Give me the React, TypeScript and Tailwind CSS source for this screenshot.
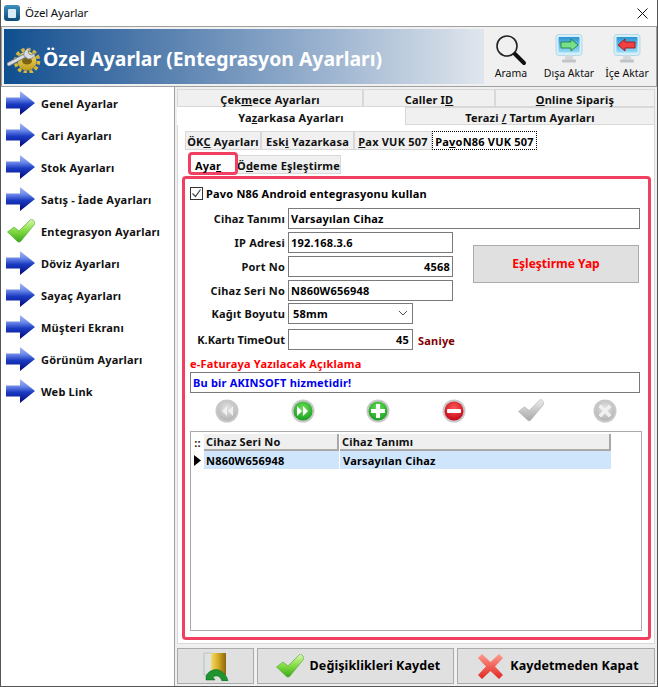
import { ReactNode } from 'react';

const uiFont = { fontFamily: '"Noto Sans", "DejaVu Sans", sans-serif' };

const ArrowIcon = ({ id }: { id: string }) => (
    <svg width="30" height="24" viewBox="0 0 30 24">
        <defs>
            <linearGradient id={id} x1="0" y1="0" x2="0" y2="1">
                <stop offset="0" stopColor="#a6b8f4" />
                <stop offset="0.3" stopColor="#6c8ae8" />
                <stop offset="0.55" stopColor="#1c3cc4" />
                <stop offset="1" stopColor="#00087a" />
            </linearGradient>
        </defs>
        <path d="M0 6.500h14V0l15 12-15 12v-6.500H0z" fill={`url(#${id})`} />
    </svg>
);

const CheckIcon = ({ id, w = 28, h = 24, gray = false }: { id: string; w?: number; h?: number; gray?: boolean }) => (
    <svg width={w} height={h} viewBox="0 0 28 24">
        <defs>
            <linearGradient id={id} x1="0" y1="0" x2="0" y2="1">
                <stop offset="0" stopColor={gray ? '#ececec' : '#d8f8b0'} />
                <stop offset="0.5" stopColor={gray ? '#c8c8c8' : '#84dc44'} />
                <stop offset="1" stopColor={gray ? '#a8a8a8' : '#3aa818'} />
            </linearGradient>
        </defs>
        <path d="M0.500 13L7 8l5 4L23 1c1-1 2-1 3 0l1.500 2c0.500 1 0.500 2-0.500 3L14 22c-1 1.500-3 1.500-4 0z" fill={`url(#${id})`} stroke={gray ? '#a8a8a8' : '#4aa82a'} strokeWidth="0.6" />
    </svg>
);

const RoundIcon = ({ id, c1, c2, gray, children }: { id: string; c1: string; c2: string; gray?: boolean; children: ReactNode }) => (
    <svg width="24" height="24" viewBox="0 0 24 24">
        <defs>
            <radialGradient id={id} cx="0.5" cy="0.35" r="0.7">
                <stop offset="0" stopColor={c1} />
                <stop offset="1" stopColor={c2} />
            </radialGradient>
        </defs>
        <circle cx="12" cy="12" r="11.5" fill="#c8c8c8" />
        <circle cx="12" cy="12" r="9.5" fill={`url(#${id})`} />
        <g fill={gray ? '#f0f0f0' : '#ffffff'}>{children}</g>
    </svg>
);

const GearIcon = () => (
    <svg width="34" height="28" viewBox="0 0 34 28">
        <defs>
            <linearGradient id="gear" x1="0" y1="0" x2="0" y2="1">
                <stop offset="0" stopColor="#f8e878" />
                <stop offset="1" stopColor="#c09818" />
            </linearGradient>
        </defs>
        <circle cx="20" cy="16" r="9.500" fill="url(#gear)" />
        <circle cx="20" cy="16" r="11.500" fill="none" stroke="#d8b838" strokeWidth="3.500" strokeDasharray="3.500 2.500" />
        <ellipse cx="20" cy="16" rx="5" ry="3.500" fill="#7a6414" />
        <path d="M2 19l17-9" stroke="#70747c" strokeWidth="4.500" strokeLinecap="round" />
        <path d="M2 19l17-9" stroke="#d8dce0" strokeWidth="3" strokeLinecap="round" />
        <path d="M17 11c-1-4 2-8 7-8l-3 3 1 3 3 1 3-2c0 4-3 6-7 6z" fill="#d8dce0" stroke="#70747c" strokeWidth="0.700" />
    </svg>
);

const MagnifierIcon = () => (
    <svg width="32" height="32" viewBox="0 0 32 32">
        <circle cx="12" cy="12" r="10" fill="none" stroke="#222" strokeWidth="1.600" />
        <path d="M20 20l9 9" stroke="#111" strokeWidth="4" strokeLinecap="round" />
    </svg>
);

const MonitorIcon = ({ id, c1, c2, left }: { id: string; c1: string; c2: string; left?: boolean }) => (
    <svg width="28" height="30" viewBox="0 0 28 30">
        <defs>
            <linearGradient id={id} x1="0" y1="0" x2="0" y2="1">
                <stop offset="0" stopColor="#2c94d4" />
                <stop offset="1" stopColor="#9adcf6" />
            </linearGradient>
        </defs>
        <rect x="1" y="0.500" width="26" height="21" rx="3" fill="#d4f0fa" stroke="#9cc8dc" strokeWidth="0.600" />
        <rect x="3.500" y="3" width="21" height="15.500" rx="1" fill={`url(#${id})`} />
        <path d="M10.500 21.500h7l1 4h-9z" fill="#d4d8dc" />
        <rect x="7" y="25.500" width="14" height="3" rx="1" fill="#c0c4c8" />
        <path
            d={left ? 'M5 11l7-6v3h10v6H12v3z' : 'M23 11l-7-6v3H6v6h10v3z'}
            fill={c1}
            stroke={c2}
            strokeWidth="0.800"
        />
    </svg>
);

const DoorIcon = () => (
    <svg width="26" height="29" viewBox="0 0 26 29">
        <defs>
            <linearGradient id="door" x1="0" y1="0" x2="1" y2="0">
                <stop offset="0" stopColor="#f4dc70" />
                <stop offset="0.5" stopColor="#d4a820" />
                <stop offset="1" stopColor="#8a6410" />
            </linearGradient>
        </defs>
        <rect x="1" y="1" width="8" height="22" fill="#dfe2e2" stroke="#a8acac" strokeWidth="0.600" />
        <path d="M8 1h15v22H8z" fill="url(#door)" />
        <path d="M3 24c3-6 10-8 15-5 3 2 6 5 7 10h-6c-1-3-3-5-5-5-2 0-3 0-4 1l2 3H3z" fill="#1f9430" stroke="#0f6a20" strokeWidth="0.500" />
    </svg>
);

const RedX = () => (
    <svg width="25" height="25" viewBox="0 0 25 25">
        <defs>
            <linearGradient id="redx" x1="0" y1="0" x2="0" y2="1">
                <stop offset="0" stopColor="#ff9a90" />
                <stop offset="1" stopColor="#e02820" />
            </linearGradient>
        </defs>
        <path d="M4 0l8.500 8L21 0l4 4-8 8.500 8 8.500-4 4-8.500-8L4 25l-4-4 8-8.500L0 4z" fill="url(#redx)" />
    </svg>
);

const menu = [
    'Genel Ayarlar',
    'Cari Ayarları',
    'Stok Ayarları',
    'Satış - İade Ayarları',
    'Entegrasyon Ayarları',
    'Döviz Ayarları',
    'Sayaç Ayarları',
    'Müşteri Ekranı',
    'Görünüm Ayarları',
    'Web Link',
];

const Field = ({ label, value, width, right }: { label: string; value: string; width: string; right?: boolean }) => (
    <div className="flex items-center h-[24px]">
        <span className="w-[99px] text-right pr-[3px] text-[#111] whitespace-nowrap">{label}</span>
        <div className={`${width} h-[21px] border border-[#7a7a7a] bg-white flex items-center px-[2px] ${right ? 'justify-end' : ''}`}>
            {value}
        </div>
    </div>
);

const Tab = ({ children, className }: { children: ReactNode; className: string }) => (
    <div className={`flex items-center justify-center pt-[2px] border border-[#d8d8d8] text-[#111] whitespace-nowrap ${className}`}>
        {children}
    </div>
);

export default function App() {
    return (
        <div
            className="w-[658px] h-[687px] flex flex-col overflow-hidden bg-[#f0f0f0] border-x border-b border-[#555] text-[11px] font-bold tracking-[0.2px] text-black leading-none"
            style={uiFont}
        >
            {/* title bar */}
            <div className="h-[26px] shrink-0 bg-white flex items-center font-normal">
                <div className="ml-[3px] w-[16px] h-[16px] rounded-[3px] bg-gradient-to-b from-[#3d8fc0] to-[#0d4a78] flex items-center justify-center">
                    <div className="w-[8px] h-[9px] bg-[#d8ecf8] rounded-[1px]" />
                </div>
                <span className="ml-[5px] text-[11.500px] tracking-[-0.2px] text-[#111]">Özel Ayarlar</span>
                <svg className="ml-auto mr-[9px]" width="11" height="11" viewBox="0 0 11 11">
                    <path d="M0.500 0.500l10 10M10.500 0.500l-10 10" stroke="#111" strokeWidth="1" />
                </svg>
            </div>

            {/* header */}
            <div className="h-[61px] shrink-0 border border-[#a0a0a0] p-[2px] flex">
                <div className="w-[480px] flex items-center pl-[3px] pt-[4px] bg-gradient-to-r from-[#0b4f8f] to-[#e0e6ed]">
                    <GearIcon />
                    <span className="ml-[2px] text-[19.400px] tracking-normal text-white">Özel Ayarlar (Entegrasyon Ayarları)</span>
                </div>
                <div className="flex-1 flex items-start pt-[5px] font-normal text-[10.500px] tracking-normal text-[#111]">
                    <div className="w-[52px] flex flex-col items-center ml-[1px]">
                        <MagnifierIcon />
                        <span className="mt-[2px]">Arama</span>
                    </div>
                    <div className="w-[62px] flex flex-col items-center ml-[1px]">
                        <MonitorIcon id="mon1" c1="#78e088" c2="#1a7a30" />
                        <span className="mt-[4px]">Dışa Aktar</span>
                    </div>
                    <div className="w-[54px] flex flex-col items-center">
                        <MonitorIcon id="mon2" c1="#f04040" c2="#901010" left />
                        <span className="mt-[4px]">İçe Aktar</span>
                    </div>
                </div>
            </div>

            <div className="flex flex-1 min-h-0">
                {/* sidebar */}
                <div className="w-[174px] shrink-0 bg-white border-r border-[#a0a0a0]">
                    {menu.map((item, i) => (
                        <div key={item} className="h-[32px] flex items-center pl-[5px]">
                            <div className="w-[30px] flex justify-center">
                                {i === 4 ? <CheckIcon id="menu-check" /> : <ArrowIcon id={`arrow-${i}`} />}
                            </div>
                            <span className="ml-[5px] text-[#111]">{item}</span>
                        </div>
                    ))}
                </div>

                {/* main */}
                <div className="flex-1 min-w-0 pl-[2px] pr-[2px] pt-[2px] flex flex-col">
                    <div className="flex h-[18px] shrink-0">
                        <Tab className="w-[186px]"><span>Çek<u>m</u>ece Ayarları</span></Tab>
                        <Tab className="w-[132px]"><span>Caller I<u>D</u></span></Tab>
                        <Tab className="flex-1"><span><u>O</u>nline Sipariş</span></Tab>
                    </div>
                    <div className="flex h-[18px] shrink-0">
                        <Tab className="w-[228px] bg-white border-transparent"><span>Ya<u>z</u>arkasa Ayarları</span></Tab>
                        <Tab className="flex-1"><span>Terazi <u>/</u> Tartım Ayarları</span></Tab>
                    </div>

                    <div className="h-[519px] shrink-0 bg-white border border-t-0 border-[#d8d8d8] pt-[6px] px-[5px] flex flex-col">
                        <div className="flex h-[19px] shrink-0 pl-[2px]">
                            <Tab className="w-[76px] bg-[#f0f0f0]"><span>ÖK<u>C</u> Ayarları</span></Tab>
                            <Tab className="w-[93px] bg-[#f0f0f0]"><span>Esk<u>i</u> Yazarkasa</span></Tab>
                            <Tab className="w-[78px] bg-[#f0f0f0]"><span><u>P</u>ax VUK 507</span></Tab>
                            <div className="w-[105px] flex items-center justify-center pt-[1px] border border-dotted border-black whitespace-nowrap">
                                <span>Pa<u>v</u>oN86 VUK 507</span>
                            </div>
                        </div>

                        <div className="flex h-[21px] shrink-0 mt-[5px] pl-[5px]">
                            <div className="w-[50px] h-[23px] mt-[-3px] z-10 flex items-center pl-[4px] pt-[3px] border-[3px] border-[#f04062] rounded-[4px] bg-white shrink-0">
                                <span>Aya<u>r</u></span>
                            </div>
                            <Tab className="w-[105px] h-[19px] ml-[-2px] bg-[#f0f0f0]"><span>Ö<u>d</u>eme Eşleştirme</span></Tab>
                        </div>

                        {/* form panel */}
                        <div className="w-[469px] h-[464px] ml-[-1px] border-[3px] border-[#f04062] rounded-[4px] bg-white flex flex-col pl-[4px] pt-[6px]">
                            <div className="flex items-center h-[16px]">
                                <div className="w-[13px] h-[13px] border border-[#333] flex items-center justify-center ml-[1px]">
                                    <svg width="11" height="11" viewBox="0 0 11 11">
                                        <path d="M1.500 5.500l3 3 5-7" fill="none" stroke="#444" strokeWidth="1.200" />
                                    </svg>
                                </div>
                                <span className="ml-[3px]">Pavo N86 Android entegrasyonu kullan</span>
                            </div>
                            <div className="relative mt-[5px]">
                                <Field label="Cihaz Tanımı" value="Varsayılan Cihaz" width="w-[352px]" />
                                <Field label="IP Adresi" value="192.168.3.6" width="w-[165px]" />
                                <Field label="Port No" value="4568" width="w-[165px]" right />
                                <Field label="Cihaz Seri No" value="N860W656948" width="w-[165px]" />
                                <div className="flex items-center h-[22px]">
                                    <span className="w-[99px] text-right pr-[3px] text-[#111]">Kağıt Boyutu</span>
                                    <div className="w-[125px] h-[21px] border border-[#7a7a7a] flex items-center pl-[4px]">
                                        58mm
                                        <svg className="ml-auto mr-[4px]" width="10" height="6" viewBox="0 0 10 6">
                                            <path d="M1 1l4 4 4-4" fill="none" stroke="#555" strokeWidth="1" />
                                        </svg>
                                    </div>
                                </div>
                                <div className="flex items-center h-[24px] mt-[3px]">
                                    <span className="w-[99px] text-right pr-[3px] text-[#111] tracking-normal whitespace-nowrap">K.Kartı TimeOut</span>
                                    <div className="w-[125px] h-[21px] border border-[#7a7a7a] flex items-center justify-end px-[3px]">45</div>
                                    <span className="ml-[5px] mt-[2px] text-[#800000]">Saniye</span>
                                </div>
                                {/* sits over the right side of the field rows */}
                                <div className="absolute left-[284px] top-[39px] w-[166px] h-[38px] bg-[#e0e0e0] border border-[#aaa] flex items-center justify-center text-[12px] tracking-normal text-[#ff0000]">
                                    Eşleştirme Yap
                                </div>
                            </div>
                            <div className="mt-[7px] ml-[1px] text-[#ff0000] h-[12px]">e-Faturaya Yazılacak Açıklama</div>
                            <div className="w-[450px] h-[21px] mt-[2px] ml-[1px] border border-[#7a7a7a] flex items-center px-[2px] text-[#0000ee]">
                                Bu bir AKINSOFT hizmetidir!
                            </div>

                            {/* record navigator */}
                            <div className="flex h-[24px] mt-[6px] pl-[26px]">
                                <div className="w-[76px]">
                                    <RoundIcon id="nav1" c1="#e4e4e4" c2="#b0b0b0" gray>
                                        <path d="M12 7v10l-5-5zM18 7v10l-5-5z" />
                                    </RoundIcon>
                                </div>
                                <div className="w-[75px]">
                                    <RoundIcon id="nav2" c1="#6ee05a" c2="#129a1c">
                                        <path d="M6 7v10l5-5zM12 7v10l5-5z" />
                                    </RoundIcon>
                                </div>
                                <div className="w-[76px]">
                                    <RoundIcon id="nav3" c1="#6ee05a" c2="#129a1c">
                                        <path d="M10 5h4v5h5v4h-5v5h-4v-5H5v-4h5z" />
                                    </RoundIcon>
                                </div>
                                <div className="w-[76px]">
                                    <RoundIcon id="nav4" c1="#ff5a5a" c2="#c00010">
                                        <rect x="5" y="10" width="14" height="4" rx="1" />
                                    </RoundIcon>
                                </div>
                                <div className="w-[75px]">
                                    <CheckIcon id="nav5" w={26} h={23} gray />
                                </div>
                                <RoundIcon id="nav6" c1="#e4e4e4" c2="#b0b0b0" gray>
                                    <path d="M8 5.500l4 4 4-4 2.500 2.500-4 4 4 4-2.500 2.500-4-4-4 4L5.500 16l4-4-4-4z" />
                                </RoundIcon>
                            </div>

                            {/* grid */}
                            <div className="w-[452px] h-[200px] mt-[8px] ml-[1px] border border-[#aaa] pt-[2px]">
                                <div className="flex h-[17px] text-[#111]">
                                    <div className="w-[13px] flex items-center justify-center bg-white">::</div>
                                    <div className="w-[135px] flex items-center pl-[2px] bg-[#efefef] border-r-2 border-b-2 border-[#a8a8a8]">Cihaz Seri No</div>
                                    <div className="w-[271px] flex items-center pl-[2px] ml-[1px] bg-[#efefef] border-r-2 border-b-2 border-[#a8a8a8]">Cihaz Tanımı</div>
                                </div>
                                <div className="flex h-[18px]">
                                    <div className="w-[13px] flex items-center justify-center bg-white">
                                        <svg width="7" height="11" viewBox="0 0 7 11"><path d="M0 0l7 5.500-7 5.500z" fill="#000" /></svg>
                                    </div>
                                    <div className="w-[135px] flex items-center pl-[2px] bg-[#cfe5fb]">N860W656948</div>
                                    <div className="w-[272px] flex items-center pl-[3px] bg-[#cfe5fb] border-l border-white">Varsayılan Cihaz</div>
                                </div>
                            </div>
                        </div>
                    </div>

                    {/* bottom buttons */}
                    <div className="flex gap-[3px] h-[36px] mt-[4px]">
                        <div className="w-[77px] bg-[#e0e0e0] border border-[#aaa] flex items-center justify-center">
                            <DoorIcon />
                        </div>
                        <div className="w-[197px] pl-[5px] bg-[#e0e0e0] border border-[#aaa] flex items-center justify-center text-[12.500px] tracking-[0.1px]">
                            <CheckIcon id="save-check" />
                            <span className="ml-[6px]">Değişiklikleri Kaydet</span>
                        </div>
                        <div className="w-[198px] pl-[5px] bg-[#e0e0e0] border border-[#aaa] flex items-center justify-center text-[12.500px] tracking-[0.1px]">
                            <RedX />
                            <span className="ml-[7px]">Kaydetmeden Kapat</span>
                        </div>
                    </div>
                </div>
            </div>
        </div>
    );
}
